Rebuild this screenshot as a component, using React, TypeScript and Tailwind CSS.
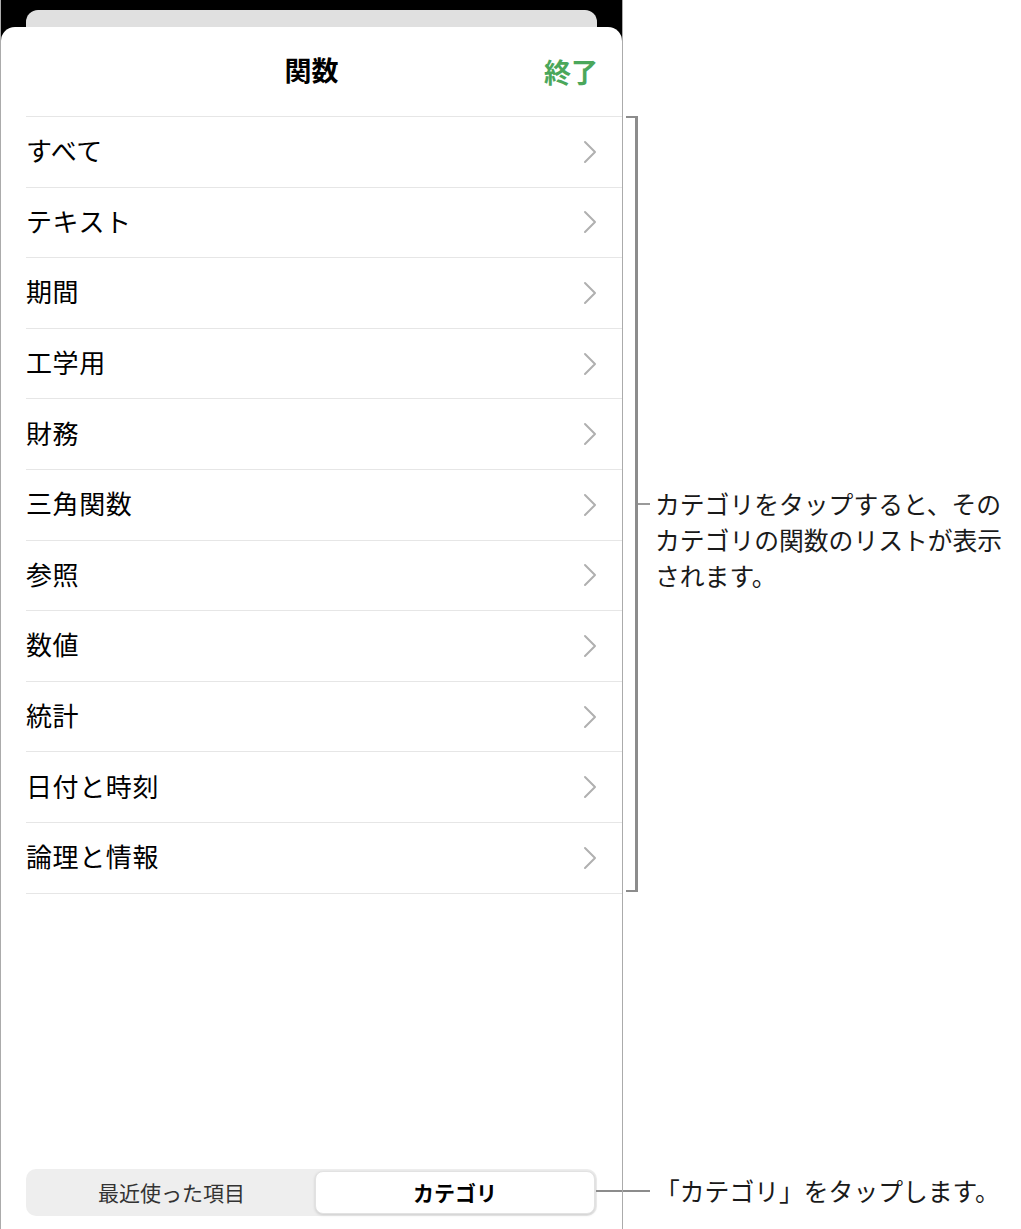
const items = [
  "すべて",
  "テキスト",
  "期間",
  "工学用",
  "財務",
  "三角関数",
  "参照",
  "数値",
  "統計",
  "日付と時刻",
  "論理と情報",
];

function Chevron() {
  return (
    <svg width="14" height="24" viewBox="0 0 14 24" fill="none">
      <path d="M2 2 L12 12 L2 22" stroke="#b0b0b0" strokeWidth="2" strokeLinecap="round" strokeLinejoin="round" />
    </svg>
  );
}

export default function App() {
  return (
    <div className="relative flex w-[1021px] h-[1229px] bg-white font-['Noto_Sans_CJK_JP','Noto_Sans',sans-serif] text-[#111]">
      {/* left panel */}
      <div className="w-[623px] h-full flex flex-col bg-black border-x border-[#ababab] shrink-0">
        <div className="h-[27px] pt-[10px] px-[25px] shrink-0">
          <div className="h-full rounded-t-[12px] bg-[#e0e0e0]" />
        </div>
        <div className="flex-1 bg-white rounded-t-[14px] flex flex-col">
          <div className="relative h-[89px] flex items-center justify-center shrink-0 pb-[4px]">
            <span className="text-[27px] font-bold leading-none text-black">関数</span>
            <span className="absolute right-[24px] top-[31px] text-[27px] font-bold leading-none text-[#4ba75b]">
              終了
            </span>
          </div>
          <div className="ml-[25px] border-t border-[#e6e6e6]">
            {items.map((it) => (
              <div
                key={it}
                className="h-[70.6px] border-b border-[#e6e6e6] flex items-center justify-between pr-[25px]"
              >
                <span className="text-[26px] tracking-[0.6px] leading-none text-black -mt-[3px]">{it}</span>
                <Chevron />
              </div>
            ))}
          </div>
          <div className="flex-1" />
          <div className="mx-[25px] mb-[13px] h-[47px] rounded-[10px] bg-[#eeeeee] p-[2px] flex">
            <div className="flex-1 flex items-center justify-center text-[21px] text-[#333]">最近使った項目</div>
            <div className="w-[280px] rounded-[8px] bg-white shadow-[0_1px_3px_rgba(0,0,0,0.15)] border border-[#e2e2e2] flex items-center justify-center text-[21px] font-bold text-black">
              カテゴリ
            </div>
          </div>
        </div>
      </div>

      {/* right annotation column */}
      <div className="relative flex-1 h-full">
        <div className="ml-[3px] mt-[116px] w-[12px] h-[776px] border-y-2 border-r-[3px] border-[#8c8c8c]" />
        <div className="absolute left-[15px] top-[503px] w-[12px] h-[2px] bg-[#9a9a9a]" />
        <div className="absolute left-[32px] top-[485px] text-[24.8px] leading-[36px] text-[#1a1a1a] whitespace-nowrap">
          <div>カテゴリをタップすると、その</div>
          <div>カテゴリの関数のリストが表示</div>
          <div>されます。</div>
        </div>
        <div className="absolute left-[32px] top-[1172px] text-[24.8px] leading-[36px] text-[#1a1a1a] whitespace-nowrap">
          「カテゴリ」をタップします。
        </div>
      </div>

      {/* bottom callout line crossing the panel border */}
      <div className="absolute left-[596px] top-[1190px] w-[54px] h-[2px] bg-[#8c8c8c]" />
      <div className="absolute left-[622px] top-[1150px] w-[1px] h-[79px] bg-[#ababab]" />
    </div>
  );
}
